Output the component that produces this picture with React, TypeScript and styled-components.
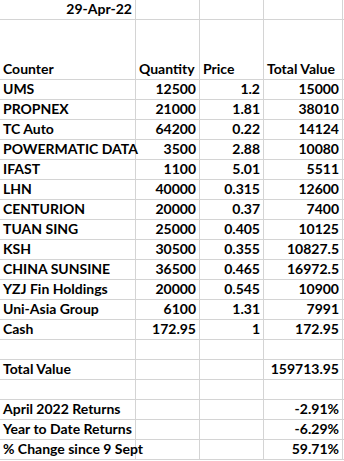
import React from 'react';
import styled, { createGlobalStyle } from 'styled-components';

const GlobalStyle = createGlobalStyle`
  html, body {
    margin: 0;
    padding: 0;
    background: #ffffff;
  }
`;

type Row = [string, string, string, string];

const holdings: Row[] = [
  ['UMS', '12500', '1.2', '15000'],
  ['PROPNEX', '21000', '1.81', '38010'],
  ['TC Auto', '64200', '0.22', '14124'],
  ['POWERMATIC DATA', '3500', '2.88', '10080'],
  ['IFAST', '1100', '5.01', '5511'],
  ['LHN', '40000', '0.315', '12600'],
  ['CENTURION', '20000', '0.37', '7400'],
  ['TUAN SING', '25000', '0.405', '10125'],
  ['KSH', '30500', '0.355', '10827.5'],
  ['CHINA SUNSINE', '36500', '0.465', '16972.5'],
  ['YZJ Fin Holdings', '20000', '0.545', '10900'],
  ['Uni-Asia Group', '6100', '1.31', '7991'],
  ['Cash', '172.95', '1', '172.95'],
];

const summary: Row[] = [
  ['', '', '', ''],
  ['Total Value', '', '', '159713.95'],
  ['', '', '', ''],
  ['April 2022 Returns', '', '', '-2.91%'],
  ['Year to Date Returns', '', '', '-6.29%'],
  ['% Change since 9 Sept', '', '', '59.71%'],
];

const Sheet = styled.div`
  display: grid;
  grid-template-columns: 136px 64px 64px 79px 1fr;
  width: 344px;
  font-family: Lato, 'Open Sans', sans-serif;
  font-weight: 700;
  font-size: 14px;
  color: #000;
`;

const Cell = styled.div<{ $align?: 'left' | 'right'; $tall?: boolean }>`
  box-sizing: border-box;
  height: ${(p) => (p.$tall ? '60px' : '20px')};
  border-right: 1px solid #d4d4d4;
  border-bottom: 1px solid #d4d4d4;
  display: flex;
  align-items: flex-end;
  justify-content: ${(p) => (p.$align === 'right' ? 'flex-end' : 'flex-start')};
  padding: 0 3px 2px 3px;
  white-space: nowrap;
  overflow: visible;
  line-height: 17px;
`;

const LastCell = styled(Cell)`
  border-right: none;
`;

function SheetRow({ row, tall }: { row: Row; tall?: boolean }) {
  return (
    <>
      <Cell $tall={tall}>{row[0]}</Cell>
      <Cell $tall={tall} $align="right">{row[1]}</Cell>
      <Cell $tall={tall} $align="right">{row[2]}</Cell>
      <Cell $tall={tall} $align="right">{row[3]}</Cell>
      <LastCell $tall={tall} />
    </>
  );
}

export default function App() {
  return (
    <>
      <GlobalStyle />
      <Sheet>
        <Cell $align="right">29-Apr-22</Cell>
        <Cell />
        <Cell />
        <Cell />
        <LastCell />

        <Cell $tall>Counter</Cell>
        <Cell $tall>Quantity</Cell>
        <Cell $tall>Price</Cell>
        <Cell $tall>Total Value</Cell>
        <LastCell $tall />

        {holdings.map((r) => (
          <SheetRow key={r[0]} row={r} />
        ))}
        {summary.map((r, i) => (
          <SheetRow key={'s' + i} row={r} />
        ))}
      </Sheet>
    </>
  );
}
